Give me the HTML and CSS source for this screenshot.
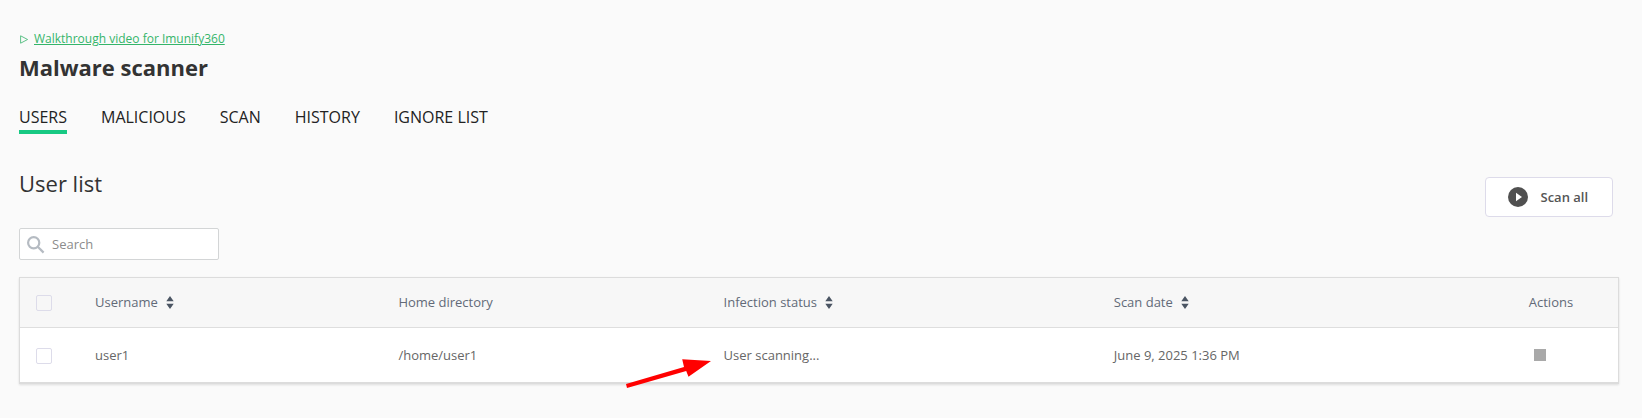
FILE: index.html
```html
<!DOCTYPE html>
<html lang="en">
<head>
<meta charset="utf-8">
<title>Malware scanner</title>
<link rel="stylesheet" href="styles.css">
</head>
<body>
<main class="page">
  <div class="walkthrough">
    <svg class="walkthrough-icon" viewBox="0 0 9 9"><path d="M.6.8v7.400l7-3.700z"/></svg>
    <a class="walkthrough-link" href="#">Walkthrough video for Imunify360</a>
  </div>
  <h1 class="title">Malware scanner</h1>
  <nav class="tabs">
    <a class="tab tab-active">USERS</a>
    <a class="tab">MALICIOUS</a>
    <a class="tab">SCAN</a>
    <a class="tab">HISTORY</a>
    <a class="tab">IGNORE LIST</a>
  </nav>
  <div class="heading">
    <h2 class="subtitle">User list</h2>
    <button class="scan-all">
      <svg class="play" viewBox="0 0 20 20"><circle cx="10" cy="10" r="10"/><path d="M8 5.8v8.4l6-4.2z"/></svg>
      <span>Scan all</span>
    </button>
  </div>
  <label class="search">
    <svg class="search-icon" viewBox="0 0 18 18"><circle cx="6.7" cy="6.7" r="5.6"/><path d="M10.8 10.8l5.8 5.8"/></svg>
    <input class="search-input" type="text" placeholder="Search">
  </label>
  <section class="table">
    <div class="row row-head">
      <span class="check"></span>
      <span class="cell">Username <svg class="sort" viewBox="0 0 8 13"><path d="M.3 5.2L4 0l3.700 5.200zM.3 7.800h7.400L4 13z"/></svg></span>
      <span class="cell">Home directory</span>
      <span class="cell">Infection status <svg class="sort" viewBox="0 0 8 13"><path d="M.3 5.2L4 0l3.700 5.200zM.3 7.800h7.400L4 13z"/></svg></span>
      <span class="cell">Scan date <svg class="sort" viewBox="0 0 8 13"><path d="M.3 5.2L4 0l3.700 5.200zM.3 7.800h7.400L4 13z"/></svg></span>
      <span class="cell">Actions</span>
    </div>
    <div class="row">
      <span class="check"></span>
      <span class="cell">user1</span>
      <span class="cell">/home/user1</span>
      <span class="cell">User scanning...</span>
      <span class="cell">June 9, 2025 1:36 PM</span>
      <span class="cell"><i class="stop"></i></span>
    </div>
    <svg class="pointer" viewBox="0 0 86 30"><path d="M0 23L58 6L56.200-1.700L85 0L62.500 15.800L60.200 9.900L1 27z"/></svg>
  </section>
</main>
</body>
</html>
```
FILE: styles.css
```css
* { box-sizing: border-box; }
body {
  margin: 0;
  min-height: 418px;
  background: #fafafa;
  color: #333;
  font: 13px/20px "Open Sans", sans-serif;
}
.page { padding: 29px 23px 0 19px; }
.walkthrough {
  display: flex;
  align-items: center;
  gap: 5px;
  height: 20px;
  font-size: 12px;
}
.walkthrough-icon {
  width: 9px;
  height: 9px;
  margin-left: 1px;
  margin-top: 1px;
  fill: none;
  stroke: #4dbb7c;
  stroke-width: 0.9;
}
.walkthrough-link { color: #35b56a; text-decoration: underline; }
.title { margin: 3px 0 0; font-size: 22px; line-height: 30px; font-weight: 700; }
.tabs { display: flex; gap: 34px; margin-top: 23px; }
.tab {
  height: 29px;
  font-size: 16px;
  line-height: 24px;
  color: #222;
  border-bottom: 4px solid transparent;
}
.tab-active { border-bottom-color: #17c983; }
.heading { display: flex; justify-content: space-between; height: 94px; padding: 34px 6px 0 0; }
.subtitle { margin: 0; font-size: 22px; line-height: 30px; font-weight: 400; }
.scan-all {
  display: flex;
  align-items: center;
  gap: 12.4px;
  width: 128px;
  height: 40px;
  margin-top: 9px;
  padding: 0 0 0 22.1px;
  border: 1px solid #dddbea;
  border-radius: 4px;
  background: #fff;
  color: #555;
  font: 600 13px/20px "Open Sans", sans-serif;
}
.play { width: 20px; height: 20px; fill: #505050; }
.play path { fill: #fff; }
.search {
  display: flex;
  align-items: center;
  width: 200px;
  height: 32px;
  padding-left: 7px;
  border: 1px solid #d3d5d6;
  border-radius: 2px;
  background: #fff;
}
.search-icon { width: 18px; height: 18px; margin-top: 1px; fill: none; stroke: #b5bbc2; stroke-width: 2.2; }
.search-input {
  width: 150px;
  margin-left: 7px;
  padding: 0;
  border: 0;
  background: none;
  font: 13px/20px "Open Sans", sans-serif;
}
.search-input::placeholder { color: #8c8c8c; }
.table {
  position: relative;
  margin-top: 17px;
  border: 1px solid #dcdcdc;
  border-bottom-width: 2px;
  box-shadow: 0 1px 2px #dedede;
  background: #fff;
}
.row {
  display: grid;
  grid-template-columns: 75px 303.4px 325.2px 390.2px 415px 1fr;
  align-items: center;
  height: 54px;
  padding-top: 1px;
  color: #666;
}
.row-head {
  height: 50px;
  padding-top: 0;
  background: #f7f7f7;
  border-bottom: 1px solid #dedede;
  color: #626a78;
}
.check {
  width: 16px;
  height: 16px;
  margin-left: 16px;
  border: 1px solid #dddcea;
  border-radius: 2px;
}
.cell { display: flex; align-items: center; padding-bottom: 2px; }
.row-head .cell { padding-bottom: 1px; }
.sort { width: 8px; height: 13px; margin-left: 8.4px; fill: #4b5563; }
.stop { width: 12px; height: 12px; margin-left: 5.6px; background: #a9a9a9; }
.pointer {
  position: absolute;
  left: 606px;
  top: 83px;
  width: 86px;
  height: 30px;
  fill: #f00;
  overflow: visible;
}
```
